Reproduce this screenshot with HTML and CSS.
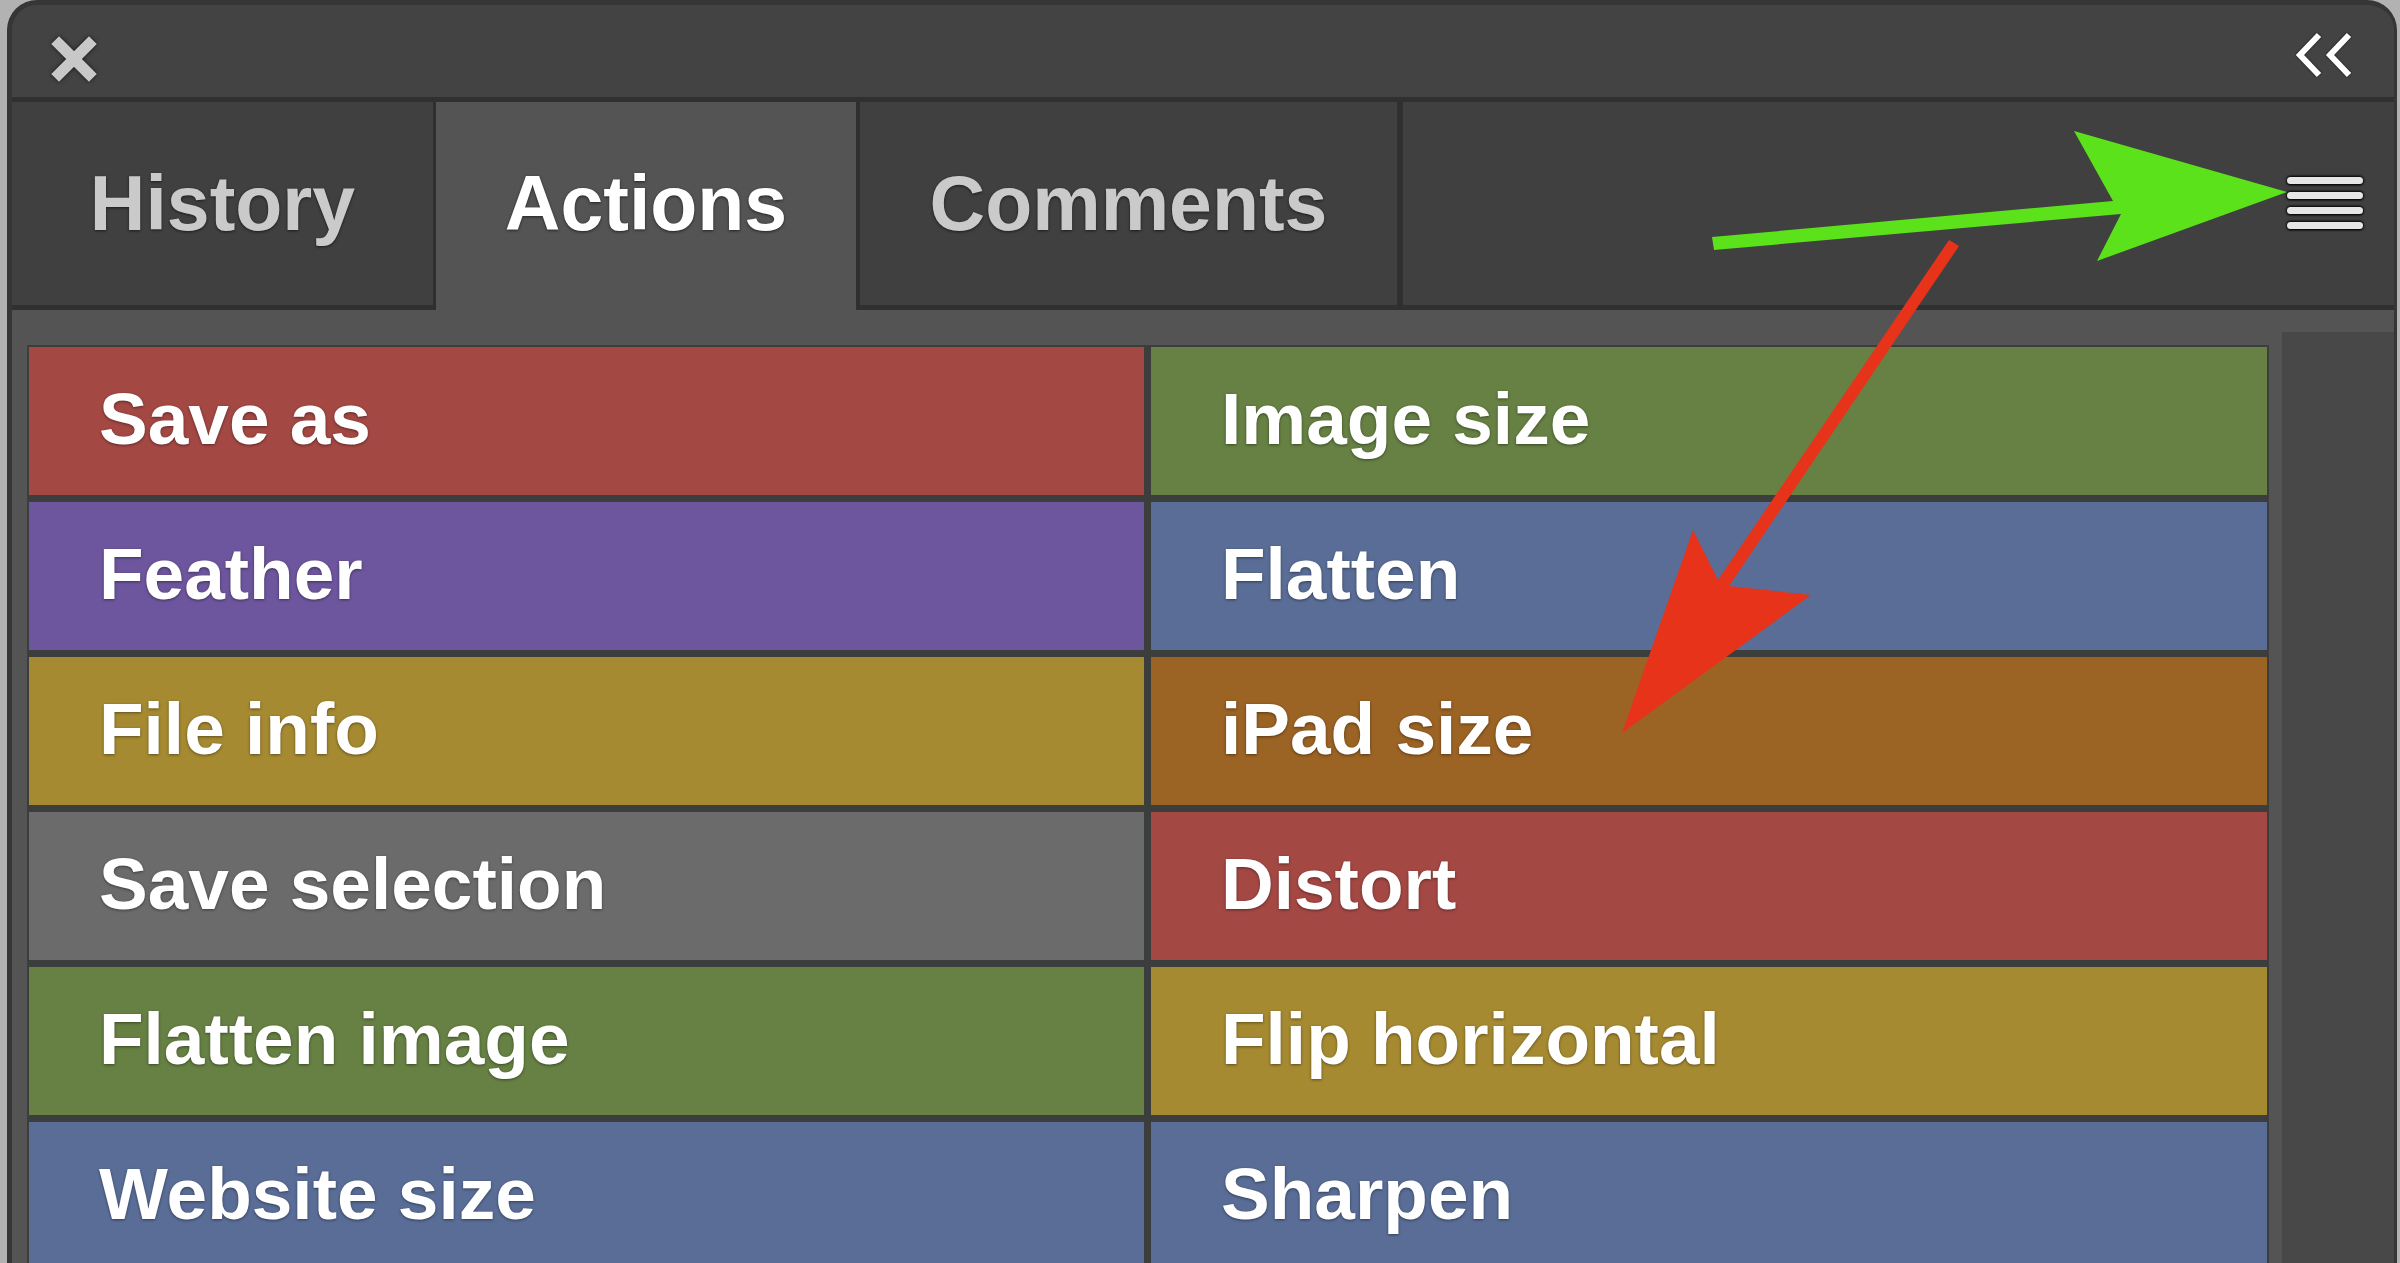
FILE: index.html
```html
<!DOCTYPE html>
<html lang="en">
<head>
<meta charset="utf-8">
<title>Actions panel</title>
<link rel="stylesheet" href="styles.css">
</head>
<body>
<div class="window">
  <div class="titlebar">
    <svg class="close" width="48" height="48" viewBox="0 0 48 48">
      <path d="M9 9 L39 39 M39 9 L9 39" stroke="#c8c8c8" stroke-width="11" stroke-linecap="square" fill="none"/>
    </svg>
    <svg class="collapse" width="56" height="46" viewBox="0 0 56 46">
      <path d="M23 3 L4 23 L23 43 M53 3 L34 23 L53 43" stroke="#ffffff" stroke-width="6" fill="none" stroke-linejoin="miter"/>
    </svg>
  </div>
  <div class="tabs">
    <div class="tab history">History</div>
    <div class="tab active">Actions</div>
    <div class="tab comments">Comments</div>
    <div class="tab-fill">
      <svg class="menu" width="76" height="53" viewBox="0 0 76 53">
        <rect x="0" y="0" width="76" height="7" rx="3.5" fill="#e6e6e6"/>
        <rect x="0" y="15" width="76" height="7" rx="3.5" fill="#e6e6e6"/>
        <rect x="0" y="30" width="76" height="7" rx="3.5" fill="#e6e6e6"/>
        <rect x="0" y="45" width="76" height="7" rx="3.5" fill="#e6e6e6"/>
      </svg>
    </div>
  </div>
  <div class="content">
    <div class="grid">
      <div class="cell red">Save as</div>
      <div class="cell green">Image size</div>
      <div class="cell purple">Feather</div>
      <div class="cell blue">Flatten</div>
      <div class="cell olive">File info</div>
      <div class="cell orange">iPad size</div>
      <div class="cell gray">Save selection</div>
      <div class="cell red">Distort</div>
      <div class="cell green">Flatten image</div>
      <div class="cell olive">Flip horizontal</div>
      <div class="cell blue">Website size</div>
      <div class="cell blue">Sharpen</div>
    </div>
    <div class="scrollbar"></div>
  </div>
</div>
<svg class="annot" width="2400" height="1263" viewBox="0 0 2400 1263">
  <polygon class="arrow-green" points="1712,237 2113,201 2074,131 2287,192 2097,261 2121,214 1714,250"/>
  <polygon class="arrow-red" points="1949,240 1959,246 1729,586 1811,595 1622,733 1693,530 1718,580"/>
</svg>
</body>
</html>
```
FILE: styles.css
```css
html, body {
  margin: 0;
  padding: 0;
}
body {
  width: 2400px;
  height: 1263px;
  overflow: hidden;
  background: #b2b2b2;
  position: relative;
  font-family: "Liberation Sans", Arial, sans-serif;
}
.window {
  margin-left: 7px;
  width: 2390px;
  height: 1263px;
  border-top: 5px solid #363636;
  border-left: 5px solid #363636;
  border-right: 3px solid #363636;
  border-radius: 30px 30px 0 0;
  background: #434343;
  overflow: hidden;
  box-sizing: border-box;
  display: flex;
  flex-direction: column;
}
.titlebar {
  height: 97px;
  box-sizing: border-box;
  flex: none;
  border-bottom: 5px solid #303030;
  display: flex;
  justify-content: space-between;
  align-items: flex-start;
  padding: 30px 42px 0 38px;
  background: #434343;
}
.close {
  filter: drop-shadow(0 0 2px #151515);
}
.collapse {
  margin-top: -3px;
  filter: drop-shadow(0 0 1px #111);
}
.tabs {
  height: 208px;
  flex: none;
  display: flex;
  background: #2f2f2f;
}
.tab {
  height: 203px;
  border-bottom: 5px solid #303030;
  background: #404040;
  color: #cacaca;
  font-weight: bold;
  font-size: 77px;
  line-height: 203px;
  text-align: center;
  text-shadow: 0 1px 3px rgba(0, 0, 0, 0.6);
  flex: none;
}
.history {
  width: 421px;
  margin-right: 3px;
}
.tab.active {
  width: 420px;
  height: 208px;
  border-bottom: none;
  line-height: 203px;
  background: #545454;
  color: #ffffff;
  margin-right: 4px;
}
.comments {
  width: 537px;
  margin-right: 6px;
}
.tab-fill {
  flex: 1;
  height: 203px;
  border-bottom: 5px solid #303030;
  background: #404040;
  display: flex;
  align-items: center;
  justify-content: flex-end;
  padding-right: 31px;
}
.menu {
  filter: drop-shadow(0 1px 1px #000) drop-shadow(0 -1px 1px #000);
}
.content {
  flex: 1;
  background: #545454;
  display: flex;
  align-items: flex-start;
  padding: 22px 0 0 15px;
  min-height: 0;
  overflow: hidden;
}
.grid {
  margin-top: 13px;
  display: grid;
  grid-template-columns: 1115px 1116px;
  grid-auto-rows: 148px;
  column-gap: 7px;
  row-gap: 7px;
  padding: 2px;
  background: #3c3e3e;
  flex: none;
}
.cell {
  display: flex;
  align-items: center;
  padding: 0 0 6px 70px;
  color: #ffffff;
  font-weight: bold;
  font-size: 73px;
  text-shadow: 0 1px 3px rgba(0, 0, 0, 0.45);
  white-space: nowrap;
}
.red { background: #a44844; }
.green { background: #668143; }
.purple { background: #6d569d; }
.blue { background: #596d97; }
.olive { background: #a68a31; }
.orange { background: #9b6324; }
.gray { background: #6b6b6b; }
.scrollbar {
  margin-left: 13px;
  flex: 1;
  align-self: stretch;
  background: #484848;
}
.annot {
  position: absolute;
  left: 0;
  top: 0;
  pointer-events: none;
}
.arrow-green { fill: #5be21a; }
.arrow-red { fill: #e8331b; }
```
